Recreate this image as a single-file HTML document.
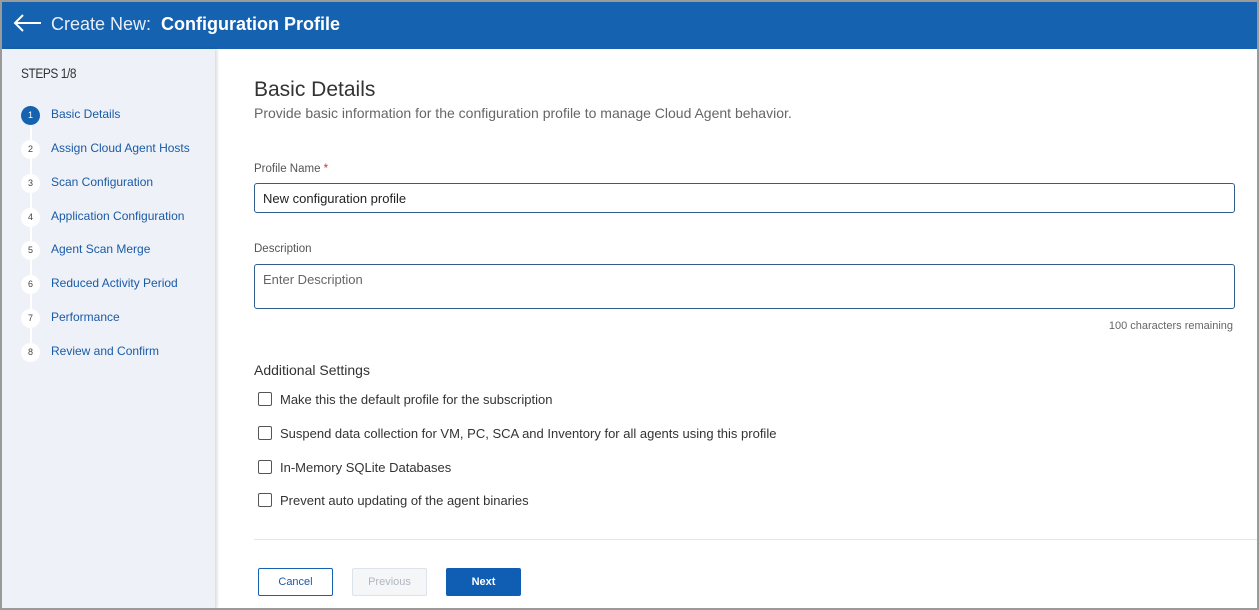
<!DOCTYPE html>
<html><head><style>
*{box-sizing:border-box;margin:0;padding:0}
body{width:1259px;height:610px;background:#9a9a9a;font-family:"Liberation Sans",sans-serif;overflow:hidden;position:relative}
.frame{position:absolute;left:2px;top:2px;width:1255px;height:606px;background:#fff;overflow:hidden}
.hdr{position:absolute;left:0;top:0;width:1255px;height:47px;background:#1562b0;color:#fff}
.hdr .t{position:absolute;left:49px;top:12px;font-size:18px;color:#e8eef8}
.hdr .t b{color:#fff}
.side{position:absolute;left:0;top:47px;width:213px;height:560px;background:#eef2f8;box-shadow:2px 0 3px rgba(0,0,0,.15)}
.side .st{position:absolute;left:19px;top:16px;font-size:14px;color:#333;letter-spacing:-.5px;transform:scaleX(.85);transform-origin:left}
.line{position:absolute;left:28px;top:66px;width:2px;height:240px;background:#fff}
.step{position:absolute;left:19px;height:18px;font-size:12px;color:#1a5aa6}
.step .c{position:absolute;left:0;top:0;width:19px;height:19px;border-radius:50%;background:#fff;color:#444;font-size:9px;text-align:center;line-height:19px}
.step .c.a{background:#1562b0;color:#fff}
.step span{position:absolute;left:30px;top:1px;white-space:nowrap}
.main{position:absolute;left:252px;top:0}
.h1{position:absolute;left:252px;top:76px;font-size:21px;color:#333}
.sub{position:absolute;left:252px;top:103px;font-size:14px;color:#666}
.lbl{position:absolute;left:252px;font-size:11.5px;color:#555}
.inp{position:absolute;left:252px;width:981px;border:1px solid #2f5f8a;border-radius:3px;font-size:13px;color:#222;padding:7px 8px}
.chk{position:absolute;left:256px;font-size:13px;color:#333}
.chk i{position:absolute;left:0;top:0;width:14px;height:14px;border:1.5px solid #555;border-radius:2px}
.chk span{position:absolute;left:22px;top:0;white-space:nowrap}
.btn{position:absolute;top:566px;width:75px;height:28px;font-size:11px;text-align:center;line-height:26px;border-radius:2px}
</style></head><body>
<div class="frame">
<div class="hdr">
<svg style="position:absolute;left:11px;top:11px" width="30" height="20" viewBox="0 0 30 20"><path d="M28 10H2M10 2L2 10L10 18" stroke="#fff" stroke-width="2" fill="none"/></svg>
<div class="t">Create New:&nbsp; <b>Configuration Profile</b></div>
</div>
<div class="side">
<div class="st">STEPS 1/8</div>
<div class="line"></div>
<div class="step" style="top:57px"><div class="c a">1</div><span>Basic Details</span></div>
<div class="step" style="top:91px"><div class="c">2</div><span>Assign Cloud Agent Hosts</span></div>
<div class="step" style="top:125px"><div class="c">3</div><span>Scan Configuration</span></div>
<div class="step" style="top:159px"><div class="c">4</div><span>Application Configuration</span></div>
<div class="step" style="top:192px"><div class="c">5</div><span>Agent Scan Merge</span></div>
<div class="step" style="top:226px"><div class="c">6</div><span>Reduced Activity Period</span></div>
<div class="step" style="top:260px"><div class="c">7</div><span>Performance</span></div>
<div class="step" style="top:294px"><div class="c">8</div><span>Review and Confirm</span></div>
</div>
<div class="h1">Basic Details</div>
<div class="sub">Provide basic information for the configuration profile to manage Cloud Agent behavior.</div>
<div class="lbl" style="top:161px">Profile Name <span style="color:#c33">*</span></div>
<div class="inp" style="top:181px;height:30px">New configuration profile</div>
<div class="lbl" style="top:241px">Description</div>
<div class="inp" style="top:262px;height:45px;color:#666">Enter Description</div>
<div style="position:absolute;right:24px;top:318px;font-size:11px;color:#666">100 characters remaining</div>
<div style="position:absolute;left:252px;top:360px;font-size:14px;color:#333">Additional Settings</div>
<div class="chk" style="top:390px"><i></i><span>Make this the default profile for the subscription</span></div>
<div class="chk" style="top:424px"><i></i><span>Suspend data collection for VM, PC, SCA and Inventory for all agents using this profile</span></div>
<div class="chk" style="top:458px"><i></i><span>In-Memory SQLite Databases</span></div>
<div class="chk" style="top:491px"><i></i><span>Prevent auto updating of the agent binaries</span></div>
<div style="position:absolute;left:252px;top:537px;width:1003px;height:1px;background:#e6e6e6"></div>
<div class="btn" style="left:256px;border:1px solid #1562b0;color:#1a5aa6">Cancel</div>
<div class="btn" style="left:350px;border:1px solid #dde3ea;background:#f4f6f8;color:#b0b7c0">Previous</div>
<div class="btn" style="left:444px;background:#0f5eb3;color:#fff;font-weight:bold;border:1px solid #0f5eb3">Next</div>
</div>
</body></html>
